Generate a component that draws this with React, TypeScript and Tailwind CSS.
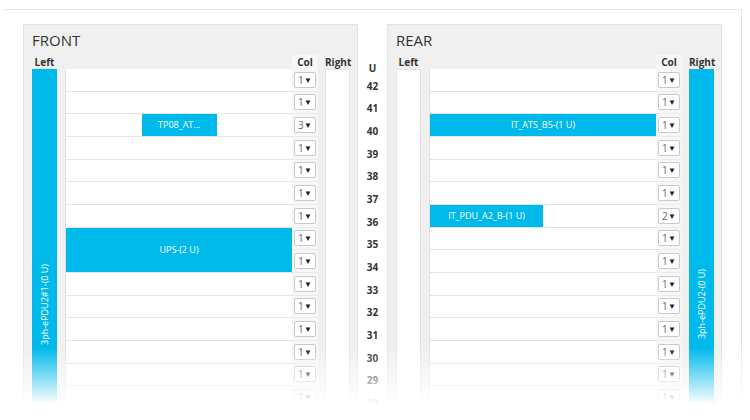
import React from 'react';

type Block = { text: string; pos: 'full' | 'mid' | 'half' };
type Slot = { u: number; span?: number; block?: Block };

interface RackSideProps {
  title: string;
  slots: Slot[];
  cols: number[];
  pduText: string;
  pduSide: 'left' | 'right';
}

const U_LIST = [42, 41, 40, 39, 38, 37, 36, 35, 34, 33, 32, 31, 30, 29, 28];

const frontSlots: Slot[] = [
  { u: 42 },
  { u: 41 },
  { u: 40, block: { text: 'TP08_AT...', pos: 'mid' } },
  { u: 39 },
  { u: 38 },
  { u: 37 },
  { u: 36 },
  { u: 35, span: 2, block: { text: 'UPS-(2 U)', pos: 'full' } },
  { u: 33 },
  { u: 32 },
  { u: 31 },
  { u: 30 },
  { u: 29 },
  { u: 28 },
];

const rearSlots: Slot[] = U_LIST.map((u) => {
  if (u === 40) return { u, block: { text: 'IT_ATS_B5-(1 U)', pos: 'full' as const } };
  if (u === 36) return { u, block: { text: 'IT_PDU_A2_B-(1 U)', pos: 'half' as const } };
  return { u };
});

const frontCols = U_LIST.map((u) => (u === 40 ? 3 : 1));
const rearCols = U_LIST.map((u) => (u === 36 ? 2 : 1));

const blockWidth = (pos: Block['pos']) => {
  if (pos === 'mid') return 'ml-[75.5px] w-[75.5px]';
  if (pos === 'half') return 'w-1/2';
  return 'w-full';
};

const PduBar = ({ text }: { text: string }) => (
  <div className="flex-1 min-h-0 overflow-hidden bg-[#00b9eb]">
    <div className="h-[470px] flex items-center justify-center">
      <span className="[writing-mode:vertical-rl] rotate-180 text-[9px] text-white whitespace-nowrap">
        {text}
      </span>
    </div>
  </div>
);

const EmptyBar = () => <div className="flex-1 min-h-0 bg-white border border-[#e3e3e3]" />;

const ColSelect = ({ value }: { value: number }) => (
  <div className="h-[22.67px] border-b border-[#ebebeb] flex items-center pl-[2px]">
    <div className="w-[22px] h-[16px] bg-white border border-[#c9c9c9] rounded-[2px] flex items-center justify-between px-[3px]">
      <span className="text-[10px] leading-none text-[#666]">{value}</span>
      <span className="text-[8px] leading-none text-[#222]">▼</span>
    </div>
  </div>
);

const RackSide: React.FC<RackSideProps> = ({ title, slots, cols, pduText, pduSide }) => {
  return (
    <div className="w-[335px] shrink-0 bg-[#f0f0f0] border border-[#e3e3e3] pt-[5px] pl-[8px] pr-[7px]">
      <div className="text-[15px] leading-[20px] text-[#333] mb-[5px]">{title}</div>
      <div className="flex">
        <div className="w-[25px] flex flex-col">
          <div className="h-[14px] text-[10px] leading-[14px] font-bold text-[#333] text-center">Left</div>
          {pduSide === 'left' ? <PduBar text={pduText} /> : <EmptyBar />}
        </div>
        <div className="w-[227px] ml-[8px] flex flex-col">
          <div className="h-[14px]" />
          <div className="bg-white border-l border-[#e3e3e3]">
            {slots.map((s) => (
              <div
                key={s.u}
                className={`${s.span === 2 ? 'h-[45.33px]' : 'h-[22.67px]'} border-b border-[#e5e5e5] flex`}
              >
                {s.block && (
                  <div
                    className={`${blockWidth(s.block.pos)} h-full bg-[#00b9eb] flex items-center justify-center text-[9px] text-white whitespace-nowrap`}
                  >
                    {s.block.text}
                  </div>
                )}
              </div>
            ))}
          </div>
        </div>
        <div className="w-[26px] bg-[#f7f7f7] flex flex-col">
          <div className="h-[14px] text-[10px] leading-[14px] font-bold text-[#333] text-center">Col</div>
          {cols.map((c, i) => (
            <ColSelect key={i} value={c} />
          ))}
        </div>
        <div className="w-[25px] ml-[7px] flex flex-col">
          <div className="h-[14px] text-[10px] leading-[14px] font-bold text-[#333] text-center whitespace-nowrap">
            Right
          </div>
          {pduSide === 'right' ? <PduBar text={pduText} /> : <EmptyBar />}
        </div>
      </div>
    </div>
  );
};

export default function App() {
  return (
    <div className="relative w-[750px] h-[420px] overflow-hidden bg-white pl-[5px] pt-[9px] font-['Open_Sans',sans-serif]">
      <div className="w-[737px] h-[600px] border-t border-r border-[#e6e6e6] pl-[18px] pt-[14px] flex items-start">
        <RackSide title="FRONT" slots={frontSlots} cols={frontCols} pduText="3ph-ePDU2#1-(0 U)" pduSide="left" />
        <div className="w-[29px] shrink-0 pt-[37px] flex flex-col items-center text-[10px] font-bold text-[#333]">
          <div className="h-[14px] leading-[14px]">U</div>
          {U_LIST.map((u) => (
            <div key={u} className="h-[22.67px] flex items-center">
              {u}
            </div>
          ))}
        </div>
        <RackSide title="REAR" slots={rearSlots} cols={rearCols} pduText="3ph-ePDU2-(0 U)" pduSide="right" />
      </div>
      <div className="pointer-events-none absolute left-0 bottom-0 w-full h-[72px] bg-[linear-gradient(to_bottom,rgba(255,255,255,0),#ffffff_78%)]" />
    </div>
  );
}
